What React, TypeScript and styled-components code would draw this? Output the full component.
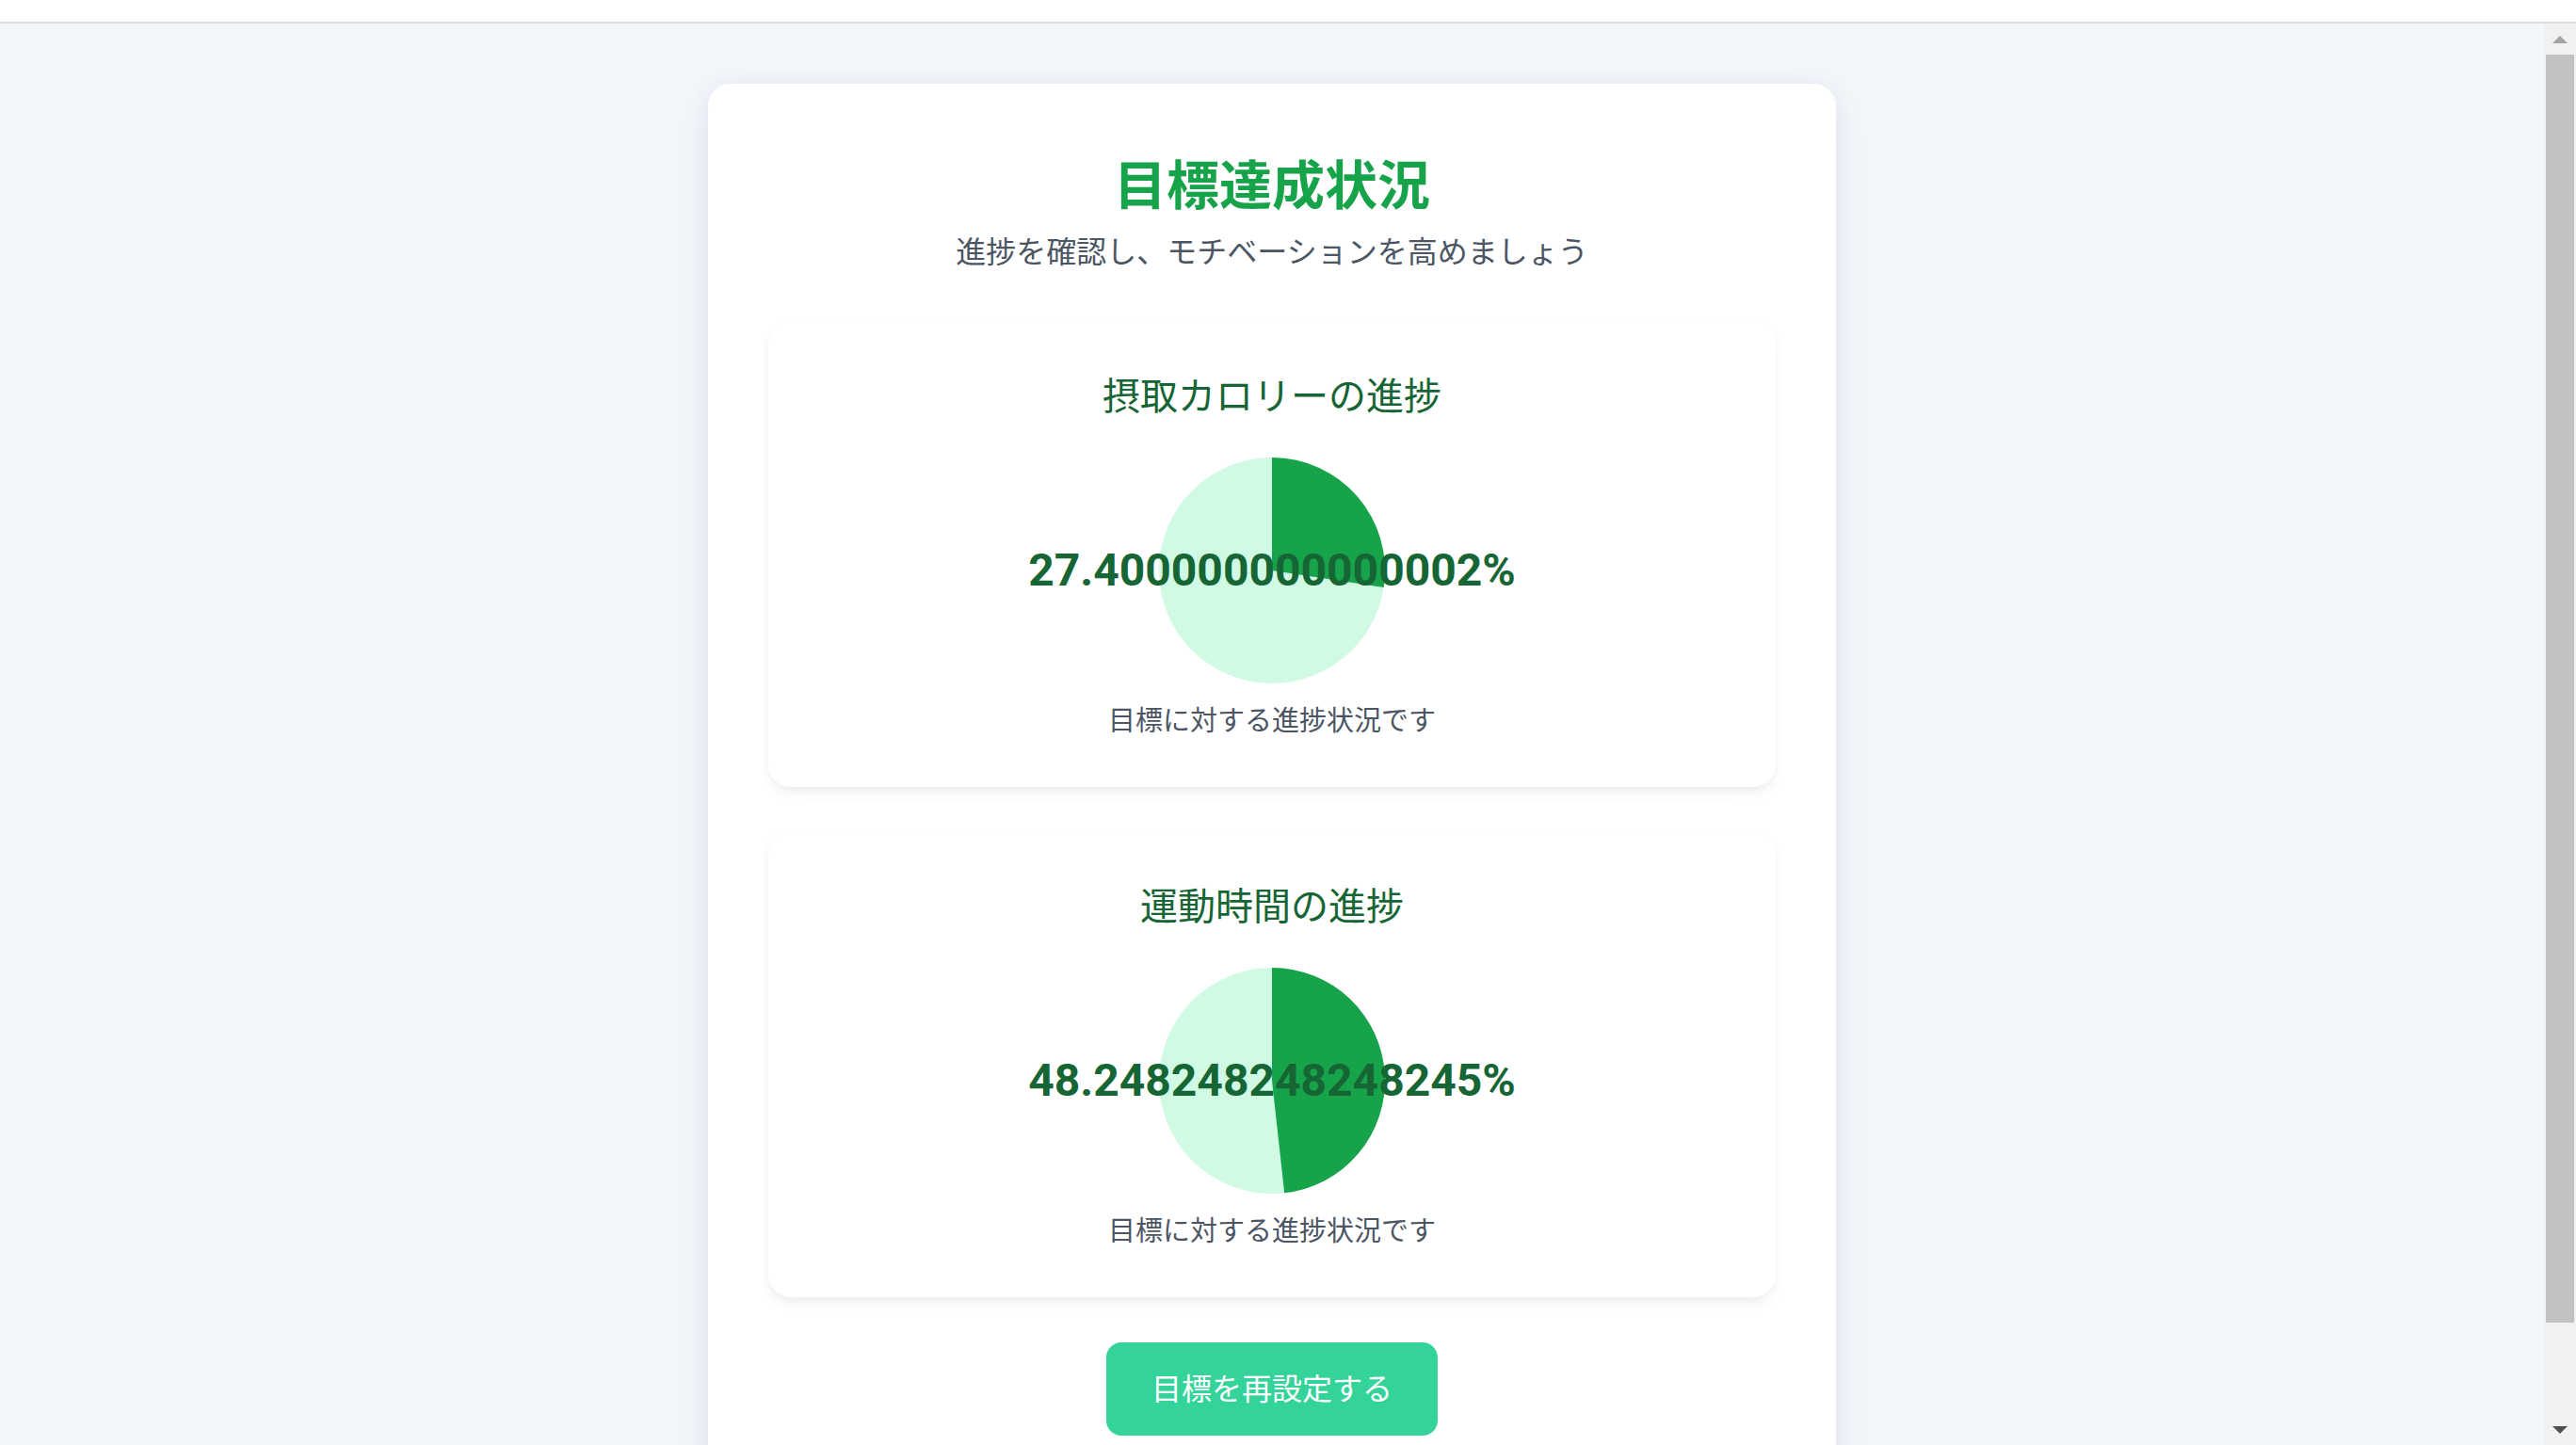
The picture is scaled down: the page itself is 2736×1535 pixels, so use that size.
import React from "react";
import styled, { createGlobalStyle } from "styled-components";

const GlobalStyle = createGlobalStyle`
  html, body {
    margin: 0;
    padding: 0;
    height: 100%;
    overflow: hidden;
  }
  body {
    font-family: Roboto, "Noto Sans CJK JP", "Noto Sans", sans-serif;
  }
  #root {
    height: 100%;
  }
`;

const Shell = styled.div`
  display: flex;
  flex-direction: column;
  height: 100vh;
`;

const TopStrip = styled.div`
  height: 23px;
  flex: 0 0 23px;
  background: #ffffff;
  border-bottom: 2px solid #dcdde1;
`;

const ViewportRow = styled.div`
  flex: 1;
  min-height: 0;
  display: flex;
  overflow: hidden;
`;

const Main = styled.main`
  flex: 1;
  min-width: 0;
  background: #f2f5fa;
  overflow: hidden;
  padding: 64px 0;
  display: flex;
  justify-content: center;
  align-items: flex-start;
`;

const Panel = styled.section`
  width: 1198px;
  box-sizing: border-box;
  background: #ffffff;
  border-radius: 24px;
  padding: 64px 64px;
  box-shadow: 0 16px 40px -8px rgba(30, 50, 90, 0.1), 0 0 24px rgba(30, 50, 90, 0.04);
  display: flex;
  flex-direction: column;
  align-items: stretch;
`;

const Header = styled.header`
  text-align: center;
  margin-bottom: 53px;
`;

const Title = styled.h1`
  margin: 0;
  font-family: "Noto Sans CJK JP", sans-serif;
  font-size: 56px;
  line-height: 80px;
  font-weight: 700;
  color: #16a34a;
`;

const Subtitle = styled.p`
  margin: 8px 0 0;
  font-family: "Noto Sans CJK JP", sans-serif;
  font-size: 32px;
  line-height: 48px;
  color: #4b5563;
`;

const CardList = styled.div`
  display: flex;
  flex-direction: column;
  gap: 48px;
`;

const ProgressCard = styled.article`
  background: #ffffff;
  border-radius: 24px;
  padding: 48px 48px 53px;
  box-shadow: 0 8px 16px -4px rgba(0, 0, 0, 0.07), 0 2px 10px rgba(0, 0, 0, 0.03);
  display: flex;
  flex-direction: column;
  align-items: center;
`;

const CardTitle = styled.h2`
  margin: 0;
  font-family: "Noto Sans CJK JP", sans-serif;
  font-size: 40px;
  line-height: 56px;
  font-weight: 400;
  color: #166534;
`;

const ChartStack = styled.div`
  margin-top: 32px;
  height: 256px;
  display: grid;
  place-items: center;
  & > * {
    grid-area: 1 / 1;
  }
`;

const PieSvg = styled.svg`
  width: 240px;
  height: 240px;
  display: block;
`;

const Percent = styled.span`
  font-family: Roboto, sans-serif;
  font-size: 48px;
  line-height: 64px;
  font-weight: 700;
  color: #166534;
  white-space: nowrap;
`;

const CardNote = styled.p`
  margin: 9px 0 0;
  font-family: "Noto Sans CJK JP", sans-serif;
  font-size: 29px;
  line-height: 40px;
  color: #4b5563;
`;

const ActionRow = styled.div`
  margin-top: 48px;
  display: flex;
  justify-content: center;
`;

const ResetButton = styled.button`
  box-sizing: border-box;
  height: 99px;
  padding: 0 48px 6px;
  border: none;
  border-radius: 16px;
  background: #34d399;
  color: #ffffff;
  font-family: "Noto Sans CJK JP", sans-serif;
  font-size: 32px;
  line-height: 48px;
  cursor: pointer;
`;

const ScrollTrack = styled.div`
  width: 34px;
  flex: 0 0 34px;
  background: #f1f1f1;
  display: flex;
  flex-direction: column;
`;

const ScrollArrow = styled.div`
  height: 33px;
  flex: 0 0 33px;
  display: flex;
  align-items: center;
  justify-content: center;
`;

const ThumbArea = styled.div`
  flex: 1;
  display: flex;
  flex-direction: column;
  padding: 0 2px;
`;

const Thumb = styled.div`
  height: 1347px;
  background: #c1c1c1;
`;

function Pie({ pct }: { pct: number }) {
  const r = 120;
  const a = (pct / 100) * Math.PI * 2;
  const x = r + r * Math.sin(a);
  const y = r - r * Math.cos(a);
  const large = pct > 50 ? 1 : 0;
  const d = `M ${r} ${r} L ${r} 0 A ${r} ${r} 0 ${large} 1 ${x} ${y} Z`;
  return (
    <PieSvg viewBox="0 0 240 240">
      <circle cx={r} cy={r} r={r} fill="#d1fae5" />
      <path d={d} fill="#16a34a" />
    </PieSvg>
  );
}

const items = [
  { title: "摂取カロリーの進捗", value: 27.400000000000002 },
  { title: "運動時間の進捗", value: 48.248248248248245 },
];

export default function App() {
  return (
    <>
      <GlobalStyle />
      <Shell>
        <TopStrip />
        <ViewportRow>
          <Main>
            <Panel>
              <Header>
                <Title>目標達成状況</Title>
                <Subtitle>進捗を確認し、モチベーションを高めましょう</Subtitle>
              </Header>
              <CardList>
                {items.map((it) => (
                  <ProgressCard key={it.title}>
                    <CardTitle>{it.title}</CardTitle>
                    <ChartStack>
                      <Pie pct={it.value} />
                      <Percent>{`${it.value}%`}</Percent>
                    </ChartStack>
                    <CardNote>目標に対する進捗状況です</CardNote>
                  </ProgressCard>
                ))}
              </CardList>
              <ActionRow>
                <ResetButton>目標を再設定する</ResetButton>
              </ActionRow>
            </Panel>
          </Main>
          <ScrollTrack>
            <ScrollArrow>
              <svg width="16" height="8" viewBox="0 0 16 8">
                <polygon points="8,0 16,8 0,8" fill="#a3a3a3" />
              </svg>
            </ScrollArrow>
            <ThumbArea>
              <Thumb />
            </ThumbArea>
            <ScrollArrow>
              <svg width="16" height="8" viewBox="0 0 16 8">
                <polygon points="0,0 16,0 8,8" fill="#505050" />
              </svg>
            </ScrollArrow>
          </ScrollTrack>
        </ViewportRow>
      </Shell>
    </>
  );
}
